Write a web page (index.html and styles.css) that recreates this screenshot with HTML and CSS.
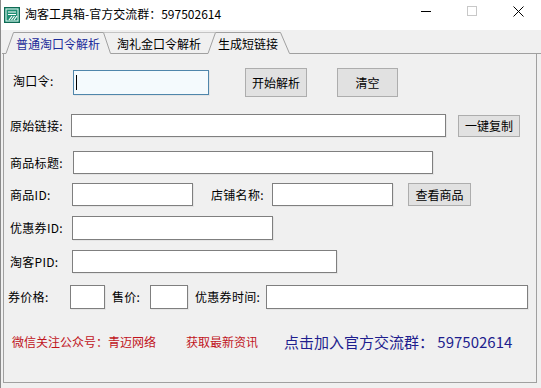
FILE: index.html
```html
<!DOCTYPE html>
<html lang="zh-CN">
<head>
  <meta charset="UTF-8">
  <title>淘客工具箱</title>
  <link rel="stylesheet" href="styles.css">
</head>
<body>
  <div class="window">
    <div class="titlebar">
      <svg class="app-icon" width="16" height="16" viewBox="0 0 16 16">
        <rect x="0.5" y="0.5" width="15" height="15" fill="#1f8f74" stroke="#0f6b55"/>
        <rect x="2" y="2" width="12" height="12" fill="none" stroke="#e8f6f1" stroke-width="1"/>
        <path d="M4 5 H12 M4 7.5 H12" stroke="#ffffff" stroke-width="1.2"/>
        <path d="M5 13 L8 9 M7.5 13 L10.5 9 M10 13 L13 9" stroke="#ffffff" stroke-width="1.2"/>
      </svg>
      <span class="title">淘客工具箱-官方交流群：597502614</span>
      <div class="controls">
        <span class="ctl">
          <svg width="10" height="10" viewBox="0 0 10 10"><path d="M0 5.5 H10" stroke="#000" stroke-width="1"/></svg>
        </span>
        <span class="ctl">
          <svg width="10" height="10" viewBox="0 0 10 10"><rect x="0.5" y="0.5" width="9" height="9" fill="none" stroke="#c8c8c8"/></svg>
        </span>
        <span class="ctl">
          <svg width="11" height="11" viewBox="0 0 11 11"><path d="M0.5 0.5 L10.5 10.5 M10.5 0.5 L0.5 10.5" stroke="#000" stroke-width="1"/></svg>
        </span>
      </div>
    </div>

    <div class="tabs">
      <svg class="tab-outline" width="540" height="24" viewBox="0 0 540 24">
        <path d="M103 2.5 H214" stroke="#c4c4c4" fill="none"/>
        <path d="M1 23.5 H5 L12.5 2.5 H102.5 L109.5 23.5 H207" stroke="#a0a0a0" fill="none"/>
        <path d="M207 23.5 L214.5 2.5 H279.5 L288.5 23.5 H540" stroke="#a0a0a0" fill="none"/>
      </svg>
      <span class="tab tab-active">普通淘口令解析</span>
      <span class="tab">淘礼金口令解析</span>
      <span class="tab">生成短链接</span>
    </div>

    <div class="panel">
      <div class="row row-code">
        <span class="lbl lbl-code">淘口令:</span>
        <div class="field field-focus f-code"><span class="caret"></span></div>
        <button class="btn btn-parse">开始解析</button>
        <button class="btn btn-clear">清空</button>
      </div>

      <div class="row row-link">
        <span class="lbl lbl-link">原始链接:</span>
        <div class="field f-link"></div>
        <button class="btn btn-copy">一键复制</button>
      </div>

      <div class="row row-title">
        <span class="lbl lbl-title">商品标题:</span>
        <div class="field f-title"></div>
      </div>

      <div class="row row-id">
        <span class="lbl lbl-std">商品ID:</span>
        <div class="field f-id"></div>
        <span class="lbl lbl-shop">店铺名称:</span>
        <div class="field f-shop"></div>
        <button class="btn btn-view">查看商品</button>
      </div>

      <div class="row row-coupon">
        <span class="lbl lbl-std">优惠券ID:</span>
        <div class="field f-coupon"></div>
      </div>

      <div class="row row-pid">
        <span class="lbl lbl-std">淘客PID:</span>
        <div class="field f-pid"></div>
      </div>

      <div class="row row-price">
        <span class="lbl lbl-price">券价格:</span>
        <div class="field f-price"></div>
        <span class="lbl lbl-sale">售价:</span>
        <div class="field f-sale"></div>
        <span class="lbl lbl-time">优惠券时间:</span>
        <div class="field f-time"></div>
      </div>

      <div class="row row-footer">
        <span class="note note-wechat">微信关注公众号：青迈网络</span>
        <span class="note note-news">获取最新资讯</span>
        <span class="join">点击加入官方交流群： 597502614</span>
      </div>
    </div>
  </div>
</body>
</html>
```

FILE: styles.css
```css
body {
  margin: 0;
  background: #f0f0f0;
  font-family: "Noto Sans CJK SC", "Noto Sans", sans-serif;
  font-size: 12px;
  color: #000000;
}

.window {
  width: 540px;
  height: 388px;
  overflow: hidden;
  border-left: 1px solid #8a8a8a;
  background: #f0f0f0;
}

/* title bar */
.titlebar {
  height: 30px;
  background: #ffffff;
  display: flex;
  align-items: center;
}

.app-icon {
  margin-left: 3px;
  flex: none;
}

.title {
  margin-left: 5px;
  font-size: 12px;
  line-height: 16px;
  margin-top: -3px;
}

.controls {
  margin-left: auto;
  display: flex;
  height: 30px;
}

.ctl {
  width: 46px;
  height: 30px;
  display: flex;
  align-items: center;
  justify-content: center;
  margin-top: -4px;
}

/* tabs */
.tabs {
  position: relative;
  height: 24px;
  display: flex;
  gap: 17px;
  padding-left: 15px;
  box-sizing: border-box;
}

.tab-outline {
  position: absolute;
  left: 0;
  top: 0;
}

.tab {
  position: relative;
  padding-top: 6px;
  line-height: 16px;
  white-space: nowrap;
}

.tab-active {
  color: #1c2c9a;
}

/* panel */
.panel {
  margin-left: 2px;
  width: 534px;
  height: 329px;
  box-sizing: border-box;
  border: 1px solid #a0a0a0;
  border-top: none;
  padding-left: 6px;
  display: flex;
  flex-direction: column;
}

.row {
  display: flex;
  align-items: center;
  height: 23px;
  flex: none;
}

.row-code { margin-top: 14px; height: 29px; }
.row-link { margin-top: 17px; }
.row-title { margin-top: 14px; }
.row-id { margin-top: 9px; }
.row-coupon { margin-top: 10px; height: 24px; }
.row-pid { margin-top: 10px; }
.row-price { margin-top: 12px; height: 24px; }
.row-footer { margin-top: 23px; height: 20px; }

.lbl {
  flex: none;
  white-space: nowrap;
  line-height: 16px;
  letter-spacing: 0.3px;
}

.lbl-code { margin-left: 3px; width: 60px; margin-top: -4px; }
.lbl-link { width: 61px; }
.lbl-title { width: 63px; }
.lbl-std { width: 62px; }
.lbl-shop { margin-left: 18px; width: 61px; }
.lbl-price { margin-left: -2px; width: 62px; }
.lbl-sale { margin-left: 7px; width: 38px; }
.lbl-time { margin-left: 7px; width: 71px; }

.field {
  flex: none;
  height: 100%;
  box-sizing: border-box;
  background: #ffffff;
  border: 1px solid #7f7f7f;
  box-shadow: 1px 1px 0 #e4e4e4;
}

.field-focus {
  border-color: #4f86ab;
  background: #f4fafd;
  display: flex;
  align-items: center;
}

.caret {
  width: 1px;
  height: 15px;
  margin-left: 2px;
  background: #000000;
}

.f-code { width: 136px; height: 25px; }
.f-link { width: 375px; }
.f-title { width: 360px; }
.f-id { width: 121px; }
.f-shop { width: 121px; }
.f-coupon { width: 201px; }
.f-pid { width: 265px; }
.f-price { width: 35px; }
.f-sale { width: 38px; }
.f-time { width: 262px; }

.btn {
  flex: none;
  box-sizing: border-box;
  background: #e1e1e1;
  border: 1px solid #adadad;
  font-family: inherit;
  font-size: 12px;
  color: #000000;
  padding: 0;
  line-height: 16px;
}

.btn-parse { margin-left: 36px; width: 62px; height: 29px; }
.btn-clear { margin-left: 30px; width: 61px; height: 29px; }
.btn-copy { margin-left: 12px; width: 62px; height: 22px; }
.btn-view { margin-left: 15px; width: 63px; height: 23px; }

/* footer notes */
.note {
  color: #c0141c;
  white-space: nowrap;
  line-height: 16px;
}

.note-wechat { margin-left: 2px; width: 174px; }
.note-news { width: 98px; }

.join {
  color: #1e1e8e;
  font-size: 15px;
  line-height: 20px;
  white-space: nowrap;
}
```
